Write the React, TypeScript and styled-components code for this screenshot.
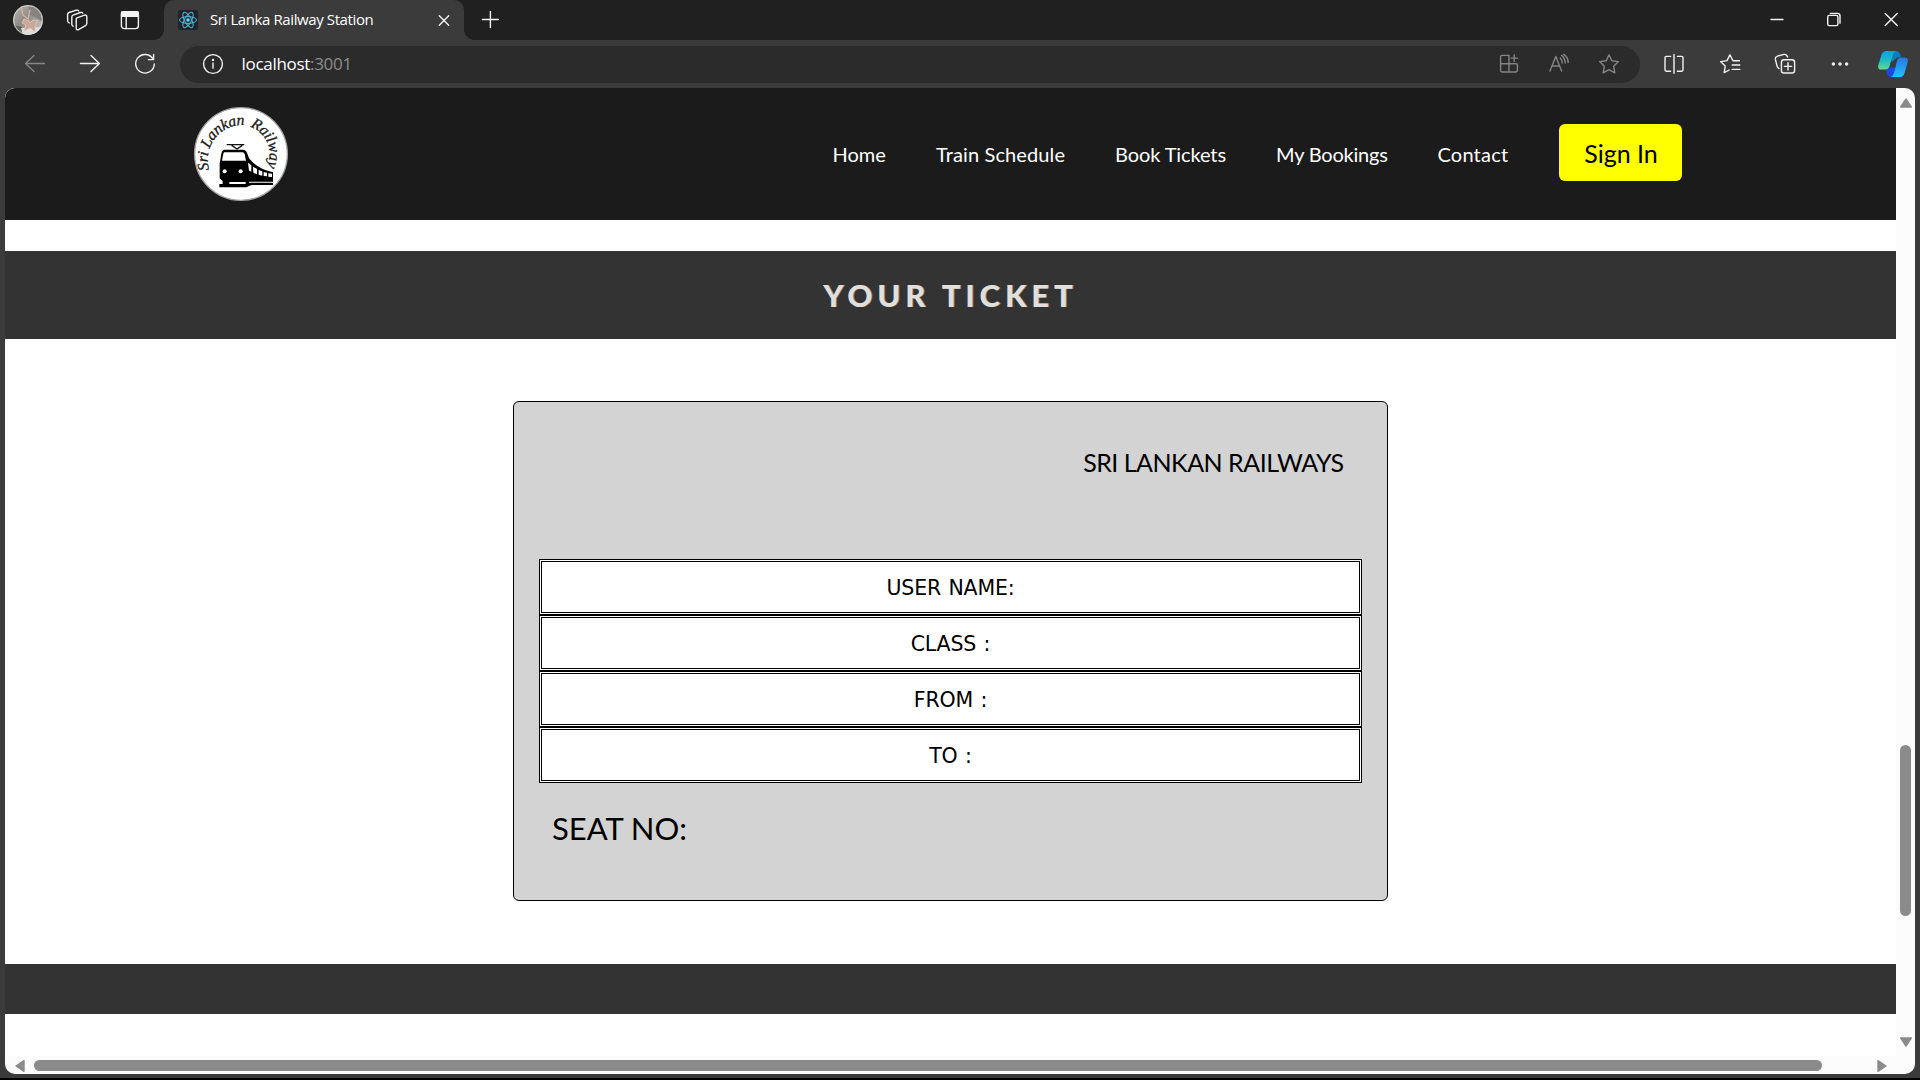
import React from "react";
import styled, { createGlobalStyle } from "styled-components";

const GlobalStyle = createGlobalStyle`
  * { box-sizing: border-box; }
  html, body { margin: 0; padding: 0; background: #3b3b3b; overflow: hidden; }
`;

const geometric = `Lato, "Liberation Sans", sans-serif`;
const system = `"Open Sans", "Noto Sans", sans-serif`;

/* ---------- browser frame ---------- */
const Window = styled.div`
  width: 1920px;
  height: 1080px;
  display: flex;
  flex-direction: column;
  background: #3b3b3b;
  border-bottom: 2px solid #000;
  font-family: ${system};
  overflow: hidden;
`;

const TabStrip = styled.div`
  height: 40px;
  flex: none;
  display: flex;
  align-items: center;
  background: #202020;
  padding: 0 17px 0 13px;
`;

const Icon = styled.svg<{ $dim?: boolean }>`
  width: 24px;
  height: 24px;
  flex: none;
  display: block;
  fill: none;
  stroke: ${(p) => (p.$dim ? "#858585" : "#f2f2f2")};
  stroke-width: 1.4;
  stroke-linecap: round;
  stroke-linejoin: round;
`;

const Avatar = styled.svg`
  width: 30px;
  height: 30px;
  display: block;
  flex: none;
`;

const StripTools = styled.div`
  display: flex;
  align-items: center;
  gap: 29px;
  margin-left: 22px;
  width: 99px;
`;

const Tab = styled.div`
  position: relative;
  width: 300px;
  height: 40px;
  display: flex;
  align-items: center;
  background: #3b3b3b;
  border-radius: 10px 10px 0 0;
  padding: 0 8px 0 14px;

  &::before,
  &::after {
    content: "";
    position: absolute;
    bottom: 0;
    width: 10px;
    height: 10px;
  }
  &::before {
    left: -10px;
    background: radial-gradient(circle at 0 0, transparent 9.5px, #3b3b3b 10px);
  }
  &::after {
    right: -10px;
    background: radial-gradient(circle at 100% 0, transparent 9.5px, #3b3b3b 10px);
  }
`;

const Favicon = styled.svg`
  width: 20px;
  height: 20px;
  flex: none;
  display: block;
`;

const TabTitle = styled.span`
  flex: 1;
  margin-left: 12px;
  padding-bottom: 2px;
  font-size: 15px;
  line-height: 20px;
  letter-spacing: -0.4px;
  color: #fff;
  white-space: nowrap;
`;

const WindowButtons = styled.div`
  margin-left: auto;
  display: flex;
  gap: 33px;
`;

const NewTab = styled.div`
  margin-left: 14px;
`;

const Toolbar = styled.div`
  height: 48px;
  flex: none;
  display: flex;
  align-items: center;
  padding: 0 12px 0 23px;
`;

const IconRow = styled.div<{ $gap: number }>`
  display: flex;
  align-items: center;
  gap: ${(p) => p.$gap}px;
`;

const AddressBar = styled.div`
  width: 1460px;
  height: 37px;
  margin: 0 22.5px 0 23px;
  border-radius: 19px;
  background: #2b2b2b;
  display: flex;
  align-items: center;
  padding: 0 19px 0 20.5px;
`;

const Url = styled.span`
  flex: 1;
  margin-left: 17px;
  font-size: 17px;
  line-height: 24px;
  letter-spacing: -0.3px;
  color: #fff;
  white-space: nowrap;
`;

const Port = styled.span`
  color: #8c8c8c;
`;

const Copilot = styled.svg`
  width: 30px;
  height: 28px;
  margin-left: 26px;
  display: block;
  flex: none;
`;

/* ---------- viewport with scrollbars ---------- */
const Viewport = styled.div`
  width: 1910px;
  height: 986px;
  margin-left: 5px;
  flex: none;
  display: grid;
  grid-template-columns: 1891px 19px;
  grid-template-rows: 968px 18px;
  background: #fcfcfc;
  border-radius: 10px;
  overflow: hidden;
`;

const Page = styled.main`
  background: #fff;
  display: flex;
  flex-direction: column;
  font-family: ${geometric};
  overflow: hidden;
`;

const VTrack = styled.div`
  display: flex;
  flex-direction: column;
  align-items: center;
  padding: 9px 0 8px;
`;

const HTrack = styled.div`
  display: flex;
  align-items: center;
  padding: 1px 8px 0 9px;
`;

const Arrow = styled.svg`
  width: 12px;
  height: 12px;
  flex: none;
  display: block;
  fill: #8b8b8b;
  stroke: #8b8b8b;
  stroke-width: 1.4;
  stroke-linejoin: round;
`;

const VThumb = styled.div`
  width: 11px;
  height: 171px;
  margin: 636px 0 auto;
  border-radius: 6px;
  background: #8b8b8b;
`;

const HThumb = styled.div`
  width: 1788px;
  height: 11px;
  margin: 0 auto 0 8px;
  border-radius: 6px;
  background: #8b8b8b;
`;

/* ---------- site ---------- */
const NavBar = styled.nav`
  height: 132px;
  flex: none;
  display: flex;
  align-items: center;
  background: #1b1b1b;
  padding: 0 214px 0 189px;
`;

const Logo = styled.svg`
  width: 94px;
  height: 94px;
  display: block;
`;

const Links = styled.div`
  margin-left: auto;
  display: flex;
  align-items: center;
  gap: 50px;
`;

const NavLink = styled.a<{ $w: number; $track: number }>`
  width: ${(p) => p.$w}px;
  font-size: 20px;
  line-height: 26px;
  padding-bottom: 1px;
  letter-spacing: ${(p) => p.$track}px;
  color: #fff;
  white-space: nowrap;
`;

const SignIn = styled.button`
  width: 123px;
  height: 57px;
  margin-top: -3px;
  border: 0;
  border-radius: 6px;
  background: #ff0;
  color: #000;
  font-family: ${geometric};
  font-size: 25px;
  padding: 0 0 0 1px;
  white-space: nowrap;
`;

const TitleBand = styled.header`
  height: 88px;
  margin-top: 31px;
  flex: none;
  background: #333;
  display: flex;
  align-items: center;
  justify-content: center;
`;

const Title = styled.h1`
  margin: 0;
  font-size: 31px;
  line-height: 40px;
  font-weight: 900;
  letter-spacing: 4.9px;
  color: #e0dfdc;
  text-shadow: 1px 0 0 #8a7d72;
  white-space: nowrap;
`;

const Ticket = styled.section`
  width: 875px;
  height: 500px;
  margin: 62px 0 0 508px;
  flex: none;
  border: 1px solid #000;
  border-radius: 6px;
  background: #d3d3d3;
  padding: 0 25px;
  display: flex;
  flex-direction: column;
`;

const Company = styled.div`
  height: 157px;
  padding: 41.5px 18.5px 0 0;
  text-align: right;
  font-size: 25px;
  line-height: 36px;
  letter-spacing: -0.5px;
  color: #000;
  white-space: nowrap;
`;

const Field = styled.div`
  height: 56px;
  flex: none;
  border: 3px double #000;
  background: #fff;
  display: flex;
  align-items: center;
  justify-content: center;
  padding-top: 1px;
  font-family: "DejaVu Sans", sans-serif;
  font-size: 20.5px;
  letter-spacing: -0.15px;
  word-spacing: 1px;
  color: #000;
  white-space: pre;
`;

const Seat = styled.div`
  padding: 22.5px 0 0 13px;
  font-size: 31px;
  line-height: 44px;
  color: #000;
  white-space: nowrap;
`;

const FooterBand = styled.footer`
  height: 50px;
  flex: none;
  margin-top: 63px;
  background: #333;
`;

const links = [
  { label: "Home", width: 53.5, track: 0 },
  { label: "Train Schedule", width: 129, track: 0.12 },
  { label: "Book Tickets", width: 111, track: -0.1 },
  { label: "My Bookings", width: 111.5, track: -0.2 },
  { label: "Contact", width: 71.5, track: 0.2 },
];

const fields = ["USER NAME:", "CLASS :", "FROM :", "TO :"];

const STAR =
  "M12 2.8 L14.8 8.8 L21.4 9.6 L16.6 14.2 L17.8 20.8 L12 17.6 L6.2 20.8 L7.4 14.2 L2.6 9.6 L9.2 8.8 Z";

function RailwayLogo() {
  return (
    <Logo viewBox="42 36 282 282">
      <circle cx="183" cy="177" r="139" fill="#fff" stroke="#a5a5a5" strokeWidth="4" />
      <defs>
        <path id="arcLeft" d="M88 224 A103 103 0 0 1 204 92" />
        <path id="arcRight" d="M210 96 A86 86 0 0 1 255 224" />
      </defs>
      <g
        fill="#1c1c1c"
        stroke="#1c1c1c"
        strokeWidth="1"
        fontFamily='"Liberation Serif", serif'
        fontStyle="italic"
        fontSize="47"
      >
        <text>
          <textPath href="#arcLeft" textLength="200" lengthAdjust="spacing">Sri Lankan</textPath>
        </text>
        <text>
          <textPath href="#arcRight" textLength="146" lengthAdjust="spacing">Railway</textPath>
        </text>
      </g>
      <path d="M140 149 H193 M155 151 L171 162 L187 151" fill="none" stroke="#111" strokeWidth="4" />
      <path
        d="M132 164 H188 Q197 164 201 173 L207 190 Q232 222 279 232 V270 H215 L198 277 H118 V267 H128 V258 L119 250 V206 L124 176 Q126 166 132 164 Z"
        fill="#000"
      />
      <path d="M132 172 H188 Q192 172 194 178 L198 197 H126 L130 176 Z" fill="#fff" />
      <path d="M204 203 L214 211 V230 L207 227 Z M219 215 L231 222 V238 L220 233 Z M236 225 L247 229 V242 L236 239 Z M251 231 L261 233 V244 L251 243 Z M265 235 L276 236 V246 L265 245 Z" fill="#fff" />
      <circle cx="134" cy="229" r="6" fill="#fff" />
      <circle cx="182" cy="229" r="6" fill="#fff" />
      <path d="M148 261 H197 V267 H148 Z M207 260 H280 V263 H207 Z" fill="#fff" />
    </Logo>
  );
}

function App() {
  return (
    <>
      <GlobalStyle />
      <Window>
        <TabStrip>
          <Avatar viewBox="0 0 30 30">
            <defs>
              <linearGradient id="photo" x1="0" y1="0" x2="1" y2="1">
                <stop offset="0" stopColor="#b9b8b2" />
                <stop offset=".45" stopColor="#8f8b86" />
                <stop offset="1" stopColor="#d8d4d0" />
              </linearGradient>
              <clipPath id="round"><circle cx="15" cy="15" r="15" /></clipPath>
            </defs>
            <g clipPath="url(#round)">
              <rect width="30" height="30" fill="url(#photo)" />
              <path d="M16 0 H30 V17 L22 12 L16 9 Z" fill="#85837f" />
              <path d="M0 20 L9 22 L11 30 H0 Z" fill="#5d6258" />
              <path d="M8 23 L30 22 V30 H10 Z" fill="#e0dddb" />
              <path d="M8 1 L10 10 L15 14 L17 5" fill="none" stroke="#d2b39f" strokeWidth="1.3" />
              <path d="M16 16 L11 14 L9 18 L13 20 L11 26 L17 23 L22 27 L22 21 L25 16 L20 15 L17 18 Z" fill="#c9a796" stroke="#e2c9bb" strokeWidth=".8" />
            </g>
            <circle cx="15" cy="15" r="14.4" fill="none" stroke="#dedede" strokeWidth=".8" />
          </Avatar>
          <StripTools>
            <Icon viewBox="0 0 24 24">
              <path d="M12 9.8 L19.6 7.2 Q21.8 6.6 21.8 8.8 V15.6 Q21.8 17 20.5 17.6 L13.5 21.6 Q11.2 22.4 11.2 20 V11.2 Q11.2 10.2 12 9.8 Z" />
              <path d="M8.2 18.2 L7.4 17.6 Q6.8 17 6.8 16 V9 Q6.8 7.6 8 7.2 L15.5 4.5 Q17.2 4 17.8 5.2" />
              <path d="M4.4 15 L3.4 14.4 Q2.6 13.8 2.6 12.6 V6.6 Q2.6 5 4 4.5 L11.5 2.2 Q13.2 1.8 13.8 3" />
            </Icon>
            <Icon viewBox="0 0 24 24">
              <rect x="3.4" y="3.6" width="17" height="17" rx="2.8" />
              <path d="M3.6 4 H20.2 V8.2 H3.6 Z" fill="#f2f2f2" />
              <path d="M8.2 8 V20.4" />
            </Icon>
          </StripTools>
          <Tab>
            <Favicon viewBox="0 0 20 20">
              <rect width="20" height="20" rx="2" fill="#20232a" />
              <g fill="none" stroke="#4fb9d6" strokeWidth="1">
                <ellipse cx="10" cy="10" rx="8.6" ry="3.4" />
                <ellipse cx="10" cy="10" rx="8.6" ry="3.4" transform="rotate(60 10 10)" />
                <ellipse cx="10" cy="10" rx="8.6" ry="3.4" transform="rotate(120 10 10)" />
              </g>
              <circle cx="10" cy="10" r="1.8" fill="#61dafb" />
            </Favicon>
            <TabTitle>Sri Lanka Railway Station</TabTitle>
            <Icon viewBox="0 0 24 24">
              <path d="M7.3 7.8 L16.7 17.2 M16.7 7.8 L7.3 17.2" />
            </Icon>
          </Tab>
          <NewTab>
            <Icon viewBox="0 0 24 24">
              <path d="M12.4 3.5 V19.5 M4.4 11.5 H20.4" />
            </Icon>
          </NewTab>
          <WindowButtons>
            <Icon viewBox="0 0 24 24">
              <path d="M6 11.5 H18" />
            </Icon>
            <Icon viewBox="0 0 24 24">
              <rect x="5.7" y="7.4" width="10.2" height="10.2" rx="1.6" />
              <path d="M8.4 5.4 H15.4 Q18 5.4 18 8 V15.2" />
            </Icon>
            <Icon viewBox="0 0 24 24">
              <path d="M6.2 5.4 L18.2 17.4 M18.2 5.4 L6.2 17.4" />
            </Icon>
          </WindowButtons>
        </TabStrip>

        <Toolbar>
          <IconRow $gap={31}>
            <Icon $dim viewBox="0 0 24 24">
              <path d="M21.5 11.5 H2.6 M11 3.4 L2.6 11.5 L11 19.6" />
            </Icon>
            <Icon viewBox="0 0 24 24">
              <path d="M2.5 11.5 H21.4 M13 3.4 L21.4 11.5 L13 19.6" />
            </Icon>
            <Icon viewBox="0 0 24 24">
              <path d="M20.2 7.4 A9.3 9.3 0 1 0 21.3 12 M20.6 2.4 V7.6 H15.4" />
            </Icon>
          </IconRow>
          <AddressBar>
            <Icon viewBox="0 0 24 24">
              <circle cx="12" cy="12" r="9.4" />
              <path d="M12 11 V16.2" />
              <circle cx="12" cy="7.9" r=".5" fill="#f2f2f2" />
            </Icon>
            <Url>
              localhost<Port>:3001</Port>
            </Url>
            <IconRow $gap={26}>
              <Icon $dim viewBox="0 0 24 24">
                <path d="M12 3.4 H5 Q3.6 3.4 3.6 4.8 V18.6 Q3.6 20 5 20 H19 Q20.4 20 20.4 18.6 V13 Q20.4 11.7 19 11.7 H3.6 M12 3.4 V20 M17.2 2.8 V9.4 M14 6.1 H20.6" />
              </Icon>
              <Icon $dim viewBox="0 0 24 24">
                <path d="M3 19 L8.8 4.4 L14.6 19 M5 14 H12.6 M13.2 6 Q15.2 8 15.2 11 M14.6 3.4 Q18 6 18.2 11 M16.8 2.4 Q21 5.4 21.2 10.6" />
              </Icon>
              <Icon $dim viewBox="0 0 24 24">
                <path d={STAR} />
              </Icon>
            </IconRow>
          </AddressBar>
          <IconRow $gap={31.2}>
            <Icon viewBox="0 0 24 24">
              <path d="M8.6 4.4 H4.4 Q3 4.4 3 5.8 V17.8 Q3 19.2 4.4 19.2 H8.6 M12 2.4 V21.2 M15.4 4.4 H19.6 Q21 4.4 21 5.8 V17.8 Q21 19.2 19.6 19.2 H15.4" />
            </Icon>
            <Icon viewBox="0 0 24 24">
              <path d="M21.4 8.8 H15 L11.9 2.8 L9 8.6 L2.6 9.6 L7.2 14 L6.2 20.6 L11.2 18 M14.2 13 H21.8 M14.2 17.4 H21.8" />
            </Icon>
            <Icon viewBox="0 0 24 24">
              <rect x="8.4" y="7.8" width="13.2" height="13.2" rx="2.6" />
              <path d="M15 10.8 V18 M11.4 14.4 H18.6 M6 16.6 Q4.4 15.6 4 13.8 L2.4 7.4 Q2 5 4.4 4.2 L10.8 2.4 Q13.6 2 14.6 5" />
            </Icon>
            <Icon viewBox="0 0 24 24">
              <g fill="#f2f2f2" stroke="none">
                <circle cx="5.4" cy="12" r="1.7" />
                <circle cx="12" cy="12" r="1.7" />
                <circle cx="18.6" cy="12" r="1.7" />
              </g>
            </Icon>
          </IconRow>
          <Copilot viewBox="0 0 30 28">
            <defs>
              <linearGradient id="cpLeft" x1="0" y1="0" x2="0" y2="1">
                <stop offset="0" stopColor="#08a2e6" />
                <stop offset=".5" stopColor="#20b9c4" />
                <stop offset="1" stopColor="#5fdd8c" />
              </linearGradient>
              <linearGradient id="cpRight" x1="0" y1="0" x2="0" y2="1">
                <stop offset="0" stopColor="#2b74e2" />
                <stop offset="1" stopColor="#19c4ff" />
              </linearGradient>
            </defs>
            <path d="M8 1 H18 Q21 1 22 4 L23 7.6 H19 L14 12 Z" fill="#0a7fb8" />
            <path d="M8 19 L13 17 L20 18 L17 25 Q16 27 13 27 Q10 27 9 24 Z" fill="#1c48dd" />
            <path d="M8.5 1 H18 Q15.6 2 14.8 5 L11.6 16 Q10.6 19.6 7 19.6 H3 Q-.6 19.6 .3 15 L3.6 4.6 Q4.8 1 8.5 1 Z" fill="url(#cpLeft)" />
            <path d="M23 7.4 H26.6 Q30.6 7.4 29.7 12 L26.4 23.4 Q25.2 27 21.5 27 H12.6 Q15 26 16 23 L19 11 Q20 7.4 23 7.4 Z" fill="url(#cpRight)" />
          </Copilot>
        </Toolbar>

        <Viewport>
          <Page>
            <NavBar>
              <RailwayLogo />
              <Links>
                {links.map((l) => (
                  <NavLink key={l.label} $w={l.width} $track={l.track}>
                    {l.label}
                  </NavLink>
                ))}
                <SignIn>Sign In</SignIn>
              </Links>
            </NavBar>
            <TitleBand>
              <Title>YOUR TICKET</Title>
            </TitleBand>
            <Ticket>
              <Company>SRI LANKAN RAILWAYS</Company>
              {fields.map((f) => (
                <Field key={f}>{f}</Field>
              ))}
              <Seat>SEAT NO:</Seat>
            </Ticket>
            <FooterBand />
          </Page>
          <VTrack>
            <Arrow viewBox="0 0 12 12"><path d="M6 2 L11.3 10 H.7 Z" /></Arrow>
            <VThumb />
            <Arrow viewBox="0 0 12 12"><path d="M6 10 L11.3 2 H.7 Z" /></Arrow>
          </VTrack>
          <HTrack>
            <Arrow viewBox="0 0 12 12"><path d="M2 6 L10 .7 V11.3 Z" /></Arrow>
            <HThumb />
            <Arrow viewBox="0 0 12 12"><path d="M10 6 L2 .7 V11.3 Z" /></Arrow>
          </HTrack>
        </Viewport>
      </Window>
    </>
  );
}

export default App;
